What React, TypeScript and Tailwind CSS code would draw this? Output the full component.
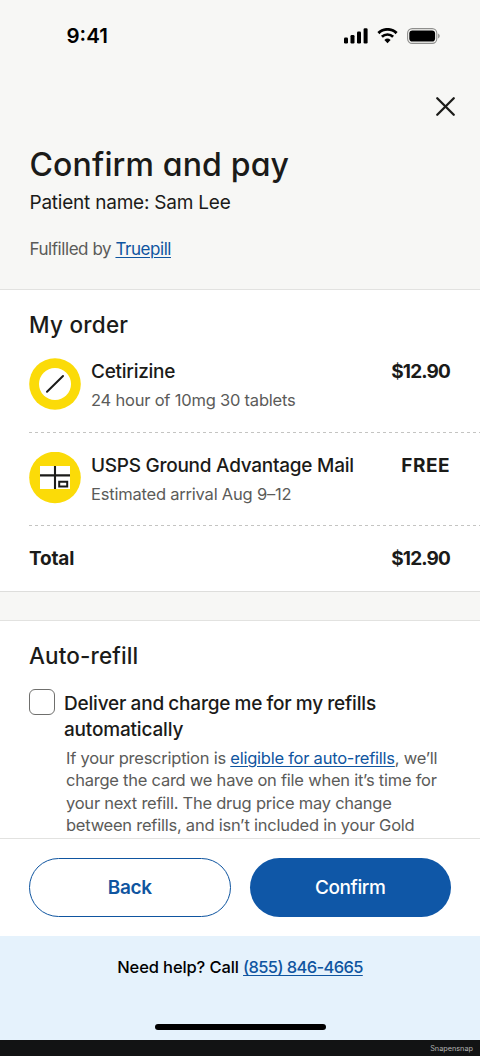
import { X } from "lucide-react";

const StatusBar = () => (
  <div className="flex h-[72px] items-center justify-between pl-[66.5px] pr-10">
    <span className="text-[20.5px] font-semibold text-black">9:41</span>
    <div className="flex items-center gap-[9px]">
      <svg width="25" height="16" viewBox="0 0 25 16" fill="#000">
        <rect x="1" y="9.5" width="4" height="6" rx="1.2" />
        <rect x="7.5" y="7" width="4" height="8.5" rx="1.2" />
        <rect x="14" y="3.6" width="4" height="11.9" rx="1.2" />
        <rect x="20.6" y="0.3" width="4" height="15.2" rx="1.2" />
      </svg>
      <svg width="21" height="16" viewBox="0 0 21 16" fill="none" stroke="#000">
        <path d="M1.4 5.1a13 13 0 0 1 18.2 0" strokeWidth="2.9" />
        <path d="M4.9 8.8a8 8 0 0 1 11.2 0" strokeWidth="2.7" />
        <path d="M10.5 15.2 7.4 12a4.6 4.6 0 0 1 6.2 0z" fill="#000" stroke="none" />
      </svg>
      <svg width="33" height="16" viewBox="0 0 33 16" fill="none">
        <rect x="0.6" y="0.6" width="29.2" height="14.8" rx="4.6" stroke="#8f8f8d" strokeWidth="1.1" />
        <rect x="2.3" y="2.4" width="25.8" height="11.2" rx="3.1" fill="#000" />
        <path d="M31.1 5.6v4.8c1-.4 1.6-1.3 1.6-2.4s-.6-2-1.6-2.4z" fill="#8f8f8d" />
      </svg>
    </div>
  </div>
);

const PillIcon = () => (
  <svg width="52" height="52" viewBox="0 0 52 52" className="shrink-0">
    <circle cx="26" cy="26" r="25.8" fill="#fbdb08" />
    <circle cx="26" cy="26" r="16" fill="#fff" />
    <path d="M18 33.7 34 18" stroke="#1b1b19" strokeWidth="2" strokeLinecap="round" />
  </svg>
);

const PackageIcon = () => (
  <svg width="52" height="52" viewBox="0 0 52 52" className="shrink-0">
    <circle cx="26" cy="25.5" r="25.8" fill="#fbdb08" />
    <path d="M11 14h30v23H11z" fill="#fff" />
    <path d="M26 14v23M11 23.4h30" stroke="#1b1b19" strokeWidth="2.1" />
    <path d="M30.2 29.7h8v4.8h-8z" fill="#fff" stroke="#1b1b19" strokeWidth="2" />
  </svg>
);

const items = [
  {
    name: "Cetirizine",
    detail: "24 hour of 10mg 30 tablets",
    price: "$12.90",
    icon: <PillIcon />,
    priceClass: "tracking-[-0.85px]",
  },
  {
    name: "USPS Ground Advantage Mail",
    detail: "Estimated arrival Aug 9–12",
    price: "FREE",
    icon: <PackageIcon />,
    priceClass: "tracking-[0.5px]",
  },
];

const Divider = () => (
  <div className="ml-[29px] h-px bg-[repeating-linear-gradient(90deg,#c4c4c2_0_3px,transparent_3px_6px)]" />
);

export default function App() {
  return (
    <div className="flex h-[1056px] w-[480px] flex-col overflow-hidden bg-[#f7f7f5] font-['Inter',sans-serif] text-[#1b1b19]">
      <header className="h-[290px] shrink-0 border-b border-[#e2e2e0]">
        <StatusBar />
        <div className="flex h-[68px] items-center justify-end pr-[18px]">
          <X className="size-[33px]" strokeWidth={1.7} />
        </div>
        <div className="pt-[5px] pl-[29.5px]">
          <h1 className="text-[32px] leading-10 font-medium tracking-[0.15px] [font-feature-settings:'cv11']">Confirm and pay</h1>
          <p className="mt-1 text-[19px] leading-7 tracking-[-0.22px]">Patient name: Sam Lee</p>
          <p className="mt-5 text-[17px] leading-6 tracking-[-0.45px] text-[#5b5b59]">
            Fulfilled by{" "}
            <a className="text-[#0f55a0] underline decoration-1 underline-offset-2">Truepill</a>
          </p>
        </div>
      </header>

      <section className="h-[302px] shrink-0 border-b border-[#dededc] bg-white">
        <h2 className="h-[49px] px-[29px] pt-5 text-[22.5px] leading-[30px] font-medium tracking-[0.25px] [font-feature-settings:'cv11']">
          My order
        </h2>
        {items.map((item) => (
          <div key={item.name}>
            <div className="flex h-[92.5px] gap-[10px] pt-[19px] pr-[30px] pl-[29px]">
              {item.icon}
              <div className="flex-1 pt-px">
                <p className="text-[19px] leading-[26px] font-medium tracking-[-0.26px] whitespace-nowrap">{item.name}</p>
                <p className="mt-[2px] text-[16.5px] leading-[26px] tracking-[-0.21px] whitespace-nowrap text-[#5b5b59]">
                  {item.detail}
                </p>
              </div>
              <span className={`pt-px text-[19px] leading-[26px] font-bold ${item.priceClass}`}>{item.price}</span>
            </div>
            <Divider />
          </div>
        ))}
        <div className="flex h-[65px] items-center justify-between pt-[2px] pr-[30px] pl-[29px] text-[19px] font-bold">
          <span className="tracking-[-0.2px]">Total</span>
          <span className="tracking-[-0.85px]">$12.90</span>
        </div>
      </section>

      <section className="mt-7 h-[218px] shrink-0 overflow-hidden border-t border-[#e2e2e0] bg-white pr-[30px] pl-[29px]">
        <h2 className="pt-5 text-[22.5px] leading-[30px] font-medium tracking-[0.12px] [font-feature-settings:'cv11']">
          Auto-refill
        </h2>
        <div className="mt-[18px] flex gap-[9px]">
          <span className="size-[26px] shrink-0 rounded-[6px] border border-[#6f6f6d]" />
          <div className="pt-[2px] whitespace-nowrap">
            <p className="text-[19px] leading-[26px] font-medium tracking-[-0.18px] [word-spacing:-0.6px]">
              Deliver and charge me for my refills
              <br />
              automatically
            </p>
            <p className="mt-[3.5px] ml-[2px] text-[16.5px] leading-[22.6px] tracking-[-0.24px] text-[#5b5b59]">
              If your prescription is{" "}
              <a className="text-[#0f55a0] underline decoration-1 underline-offset-2">eligible for auto-refills</a>, we’ll
              <br />
              charge the card we have on file when it’s time for
              <br />
              your next refill. The drug price may change
              <br />
              between refills, and isn’t included in your Gold
            </p>
          </div>
        </div>
      </section>

      <footer className="shrink-0">
        <div className="grid h-[98px] grid-cols-2 gap-[19px] border-t border-[#e2e2e0] bg-white px-[29px] pt-[19px]">
          <button className="h-[59px] rounded-full border-[1.5px] border-[#0f55a0] pt-[2px] text-[19px] font-semibold tracking-[-0.35px] text-[#0f55a0]">
            Back
          </button>
          <button className="h-[59px] rounded-full bg-[#0f57a7] pt-[2px] text-[19px] font-medium tracking-[-0.4px] text-white">
            Confirm
          </button>
        </div>
        <div className="flex h-[104px] flex-col items-center justify-between bg-[#e5f2fc] pt-[18px] pb-[10px]">
          <p className="text-[16.5px] leading-[26px] font-medium tracking-[-0.12px] text-black">
            Need help? Call{" "}
            <a className="tracking-[-0.62px] text-[#0f55a0] underline decoration-1 underline-offset-2">(855) 846-4665</a>
          </p>
          <div className="h-[6px] w-[171px] rounded-full bg-black" />
        </div>
        <div className="flex h-4 items-center justify-end bg-[#121314] pt-[3px] pr-[7px] text-[7.3px] text-[#b5b5b5]">
          Snapensnap
        </div>
      </footer>
    </div>
  );
}
